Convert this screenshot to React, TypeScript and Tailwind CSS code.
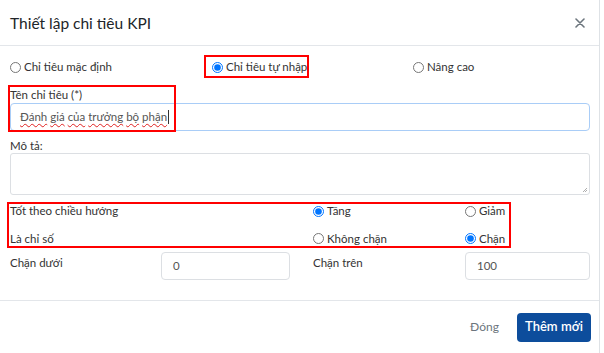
import React from "react";

const font = { fontFamily: "Lato, 'Noto Sans', sans-serif" };

function Radio({ checked, label, name }: { checked?: boolean; label: string; name: string }) {
  return (
    <label className="flex items-center gap-[3px] text-[11.5px] text-[#333]">
      <input
        type="radio"
        name={name}
        defaultChecked={checked}
        className="m-0 w-[11px] h-[11px] accent-[#0075ff]"
      />
      <span>{label}</span>
    </label>
  );
}

function Squiggle({ text }: { text: string }) {
  const words = text.split(" ");
  return (
    <span>
      {words.map((w, i) => (
        <React.Fragment key={i}>
          <span className="underline decoration-wavy decoration-[#e02020] decoration-[1px] underline-offset-[2px]">
            {w}
          </span>
          {i < words.length - 1 ? " " : ""}
        </React.Fragment>
      ))}
    </span>
  );
}

export default function App() {
  return (
    <div style={font} className="w-[604px] h-[353px] bg-white overflow-hidden">
      <div className="w-[600px] h-[353px] border-r border-[#dee2e6] flex flex-col relative">
        {/* Header */}
        <div className="h-[46px] border-b border-[#e3e6ea] flex items-center justify-between pl-[10px] pr-[14px]">
          <div className="text-[15.5px] text-[#212529] pt-[2px]">Thiết lập chi tiêu KPI</div>
          <svg width="10" height="10" viewBox="0 0 10 10" className="mt-[1px]">
            <path d="M1 1 L9 9 M9 1 L1 9" stroke="#6c757d" strokeWidth="1.6" strokeLinecap="round" />
          </svg>
        </div>

        {/* Body */}
        <div className="relative px-[10px] pr-[9px] flex-1">
          {/* radio row */}
          <div className="grid grid-cols-[202px_201px_1fr] h-[42px] items-center">
            <Radio name="type" label="Chỉ tiêu mặc định" />
            <Radio name="type" label="Chỉ tiêu tự nhập" checked />
            <Radio name="type" label="Nâng cao" />
          </div>

          <div className="text-[11.5px] text-[#333] leading-[14px] h-[15px]">Tên chỉ tiêu (*)</div>
          <div className="h-[28px] border border-[#a9cdf7] rounded-[4px] flex items-center px-[9px] text-[11.5px] text-[#555]">
            <Squiggle text="Đánh giá của trưởng bộ phận" />
            <span className="inline-block w-[1px] h-[14px] bg-[#333] ml-[1px]" />
          </div>

          <div className="text-[11.5px] text-[#333] leading-[14px] mt-[8px] h-[14px]">Mô tả:</div>
          <div className="h-[42px] border border-[#dcdfe3] rounded-[3px] relative">
            <svg width="6" height="6" viewBox="0 0 6 6" className="absolute right-[1px] bottom-[1px]">
              <path d="M5 1 L1 5 M5 3 L3 5" stroke="#999" strokeWidth="0.8" />
            </svg>
          </div>

          {/* direction rows */}
          <div className="grid grid-cols-[303px_152px_1fr] grid-rows-[28px_27px] text-[11.5px] text-[#333] mt-[2px]">
            <div className="flex items-center">Tốt theo chiều hướng</div>
            <div className="flex items-center"><Radio name="dir" label="Tăng" checked /></div>
            <div className="flex items-center"><Radio name="dir" label="Giảm" /></div>
            <div className="flex items-center">Là chỉ số</div>
            <div className="flex items-center"><Radio name="lim" label="Không chặn" /></div>
            <div className="flex items-center"><Radio name="lim" label="Chặn" checked /></div>
          </div>

          <div className="grid grid-cols-[151px_152px_152px_1fr] text-[11.5px] text-[#333]">
            <div className="pt-[2px]">Chặn dưới</div>
            <div className="pr-[23px]">
              <div className="h-[28px] border border-[#dcdfe3] rounded-[4px] flex items-center px-[11px] text-[#555]">0</div>
            </div>
            <div className="pt-[2px]">Chặn trên</div>
            <div>
              <div className="h-[28px] border border-[#dcdfe3] rounded-[4px] flex items-center px-[11px] text-[#555]">100</div>
            </div>
          </div>

          {/* annotation boxes */}
          <div className="absolute left-[204px] top-[9px] w-[105px] h-[23px] border-2 border-[#ff0000] pointer-events-none" />
          <div className="absolute left-[8px] top-[39px] w-[168px] h-[47px] border-2 border-[#ff0000] pointer-events-none" />
          <div className="absolute left-[7px] top-[156px] w-[504px] h-[46px] border-2 border-[#ff0000] pointer-events-none" />
        </div>

        {/* Footer */}
        <div className="h-[53px] border-t border-[#e3e6ea] flex items-center justify-end pr-[8px] gap-[18px]">
          <span className="text-[12px] text-[#6c757d]">Đóng</span>
          <button className="h-[29px] w-[74px] rounded-[4px] bg-[#0d4d9c] text-white text-[13px] font-semibold">
            Thêm mới
          </button>
        </div>
      </div>
    </div>
  );
}
